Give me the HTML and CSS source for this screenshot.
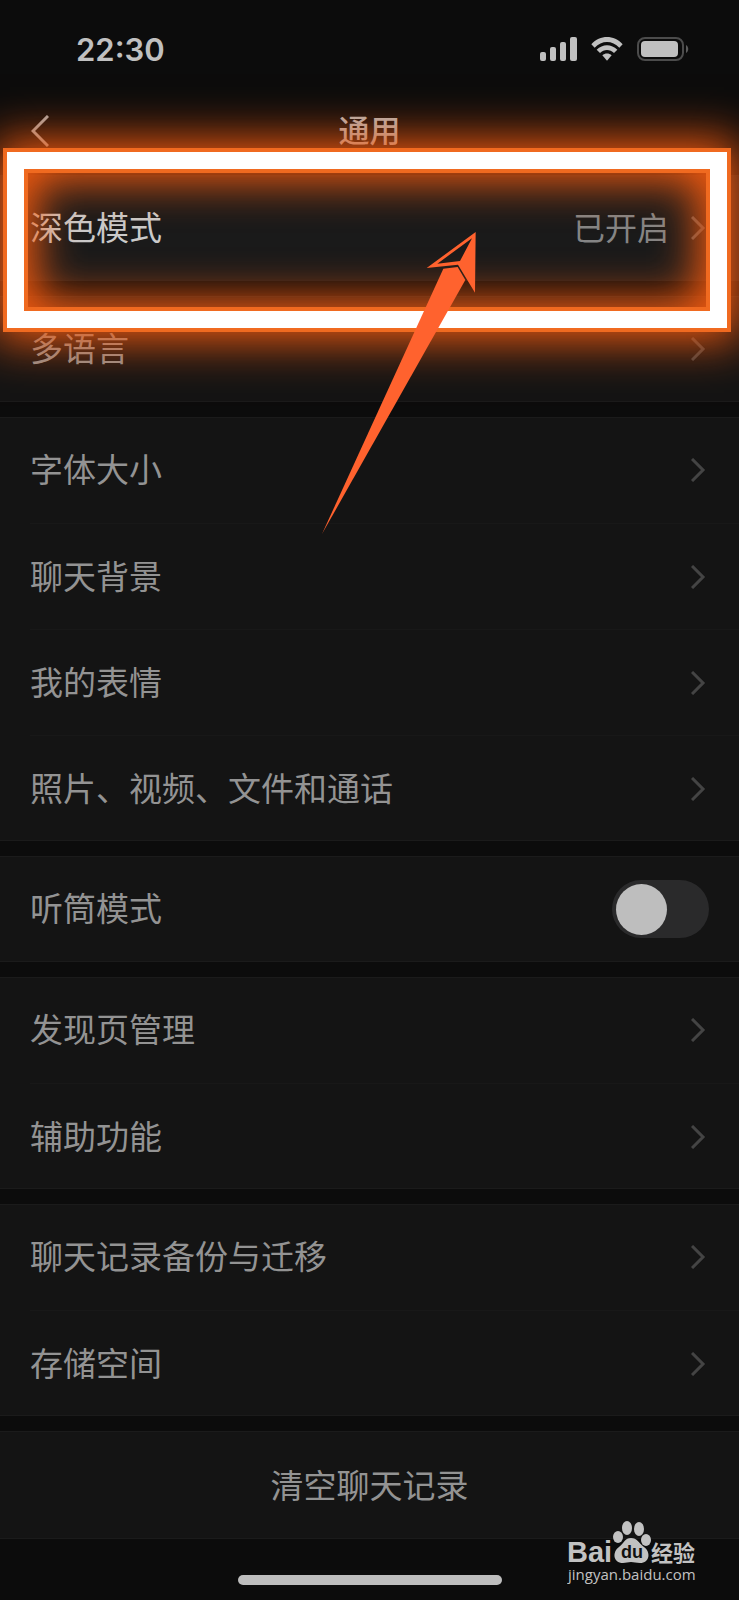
FILE: index.html
```html
<!DOCTYPE html>
<html lang="zh-CN">
<head>
<meta charset="utf-8">
<meta name="viewport" content="width=device-width, initial-scale=1">
<title>通用</title>
<link rel="stylesheet" href="styles.css">
</head>
<body>
<div class="screen">
  <div class="status-bar">
    <time class="clock">22:30</time>
    <div class="status-icons">
      <svg class="signal" viewBox="0 0 37 24" aria-hidden="true">
        <rect x="0" y="15" width="6" height="9" rx="2"/>
        <rect x="10" y="10" width="6" height="14" rx="2"/>
        <rect x="20" y="5" width="6" height="19" rx="2"/>
        <rect x="30" y="0" width="7" height="24" rx="2"/>
      </svg>
      <svg class="wifi" viewBox="0 0 94 72" aria-hidden="true">
        <path d="M0 22C26-7 68-7 94 22L84 32C63 9 31 9 10 32Z"/>
        <path d="M16 38C34 20 60 20 78 38L68 48C56 36 38 36 26 48Z"/>
        <path d="M33 55C41 48 53 48 61 55L47 71Z"/>
      </svg>
      <svg class="battery" viewBox="0 0 52 24" aria-hidden="true">
        <rect class="battery-shell" x="1" y="1" width="45" height="22" rx="7"/>
        <rect x="4" y="4" width="37" height="16" rx="4"/>
        <path class="battery-cap" d="M49 8C52 10 52 14 49 16Z"/>
      </svg>
    </div>
  </div>

  <header class="nav-bar">
    <button class="back" type="button" aria-label="返回">
      <svg viewBox="0 0 18 32" aria-hidden="true"><path d="M17 1L2 16L17 31"/></svg>
    </button>
    <h1 class="title">通用</h1>
  </header>

  <main class="groups">
    <ul class="group group-active">
      <li class="row"><a class="cell" href="#dark"><span class="label">深色模式</span><span class="value">已开启</span><svg class="chevron" viewBox="0 0 18 24" aria-hidden="true"><path d="M1 1L12 12L1 23"/></svg></a></li>
    </ul>
    <ul class="group">
      <li class="row"><a class="cell" href="#language"><span class="label">多语言</span><svg class="chevron" viewBox="0 0 18 24" aria-hidden="true"><path d="M1 1L12 12L1 23"/></svg></a></li>
    </ul>
    <ul class="group">
      <li class="row"><a class="cell" href="#font"><span class="label">字体大小</span><svg class="chevron" viewBox="0 0 18 24" aria-hidden="true"><path d="M1 1L12 12L1 23"/></svg></a></li>
      <li class="row"><a class="cell" href="#background"><span class="label">聊天背景</span><svg class="chevron" viewBox="0 0 18 24" aria-hidden="true"><path d="M1 1L12 12L1 23"/></svg></a></li>
      <li class="row"><a class="cell" href="#stickers"><span class="label">我的表情</span><svg class="chevron" viewBox="0 0 18 24" aria-hidden="true"><path d="M1 1L12 12L1 23"/></svg></a></li>
      <li class="row"><a class="cell" href="#media"><span class="label">照片、视频、文件和通话</span><svg class="chevron" viewBox="0 0 18 24" aria-hidden="true"><path d="M1 1L12 12L1 23"/></svg></a></li>
    </ul>
    <ul class="group">
      <li class="row"><div class="cell"><label class="label" for="earpiece">听筒模式</label><input class="switch" id="earpiece" type="checkbox" role="switch"></div></li>
    </ul>
    <ul class="group">
      <li class="row"><a class="cell" href="#discover"><span class="label">发现页管理</span><svg class="chevron" viewBox="0 0 18 24" aria-hidden="true"><path d="M1 1L12 12L1 23"/></svg></a></li>
      <li class="row"><a class="cell" href="#accessibility"><span class="label">辅助功能</span><svg class="chevron" viewBox="0 0 18 24" aria-hidden="true"><path d="M1 1L12 12L1 23"/></svg></a></li>
    </ul>
    <ul class="group">
      <li class="row"><a class="cell" href="#backup"><span class="label">聊天记录备份与迁移</span><svg class="chevron" viewBox="0 0 18 24" aria-hidden="true"><path d="M1 1L12 12L1 23"/></svg></a></li>
      <li class="row"><a class="cell" href="#storage"><span class="label">存储空间</span><svg class="chevron" viewBox="0 0 18 24" aria-hidden="true"><path d="M1 1L12 12L1 23"/></svg></a></li>
    </ul>
    <div class="group">
      <button class="clear" type="button">清空聊天记录</button>
    </div>
  </main>

  <div class="home-indicator"></div>

  <div class="spotlight"><div class="spotlight-inner"><div class="spotlight-glow"></div></div></div>

  <svg class="arrow" viewBox="60 60 474 918" aria-hidden="true">
    <path d="M66 972L430 176L473 171L496 210Z"/>
    <path fill-rule="evenodd" d="M527 66L380 174L474 164L525 248ZM516 85L412 161L480 153Z"/>
  </svg>

  <div class="watermark">
    <svg viewBox="0 0 134 66" role="img" aria-label="Baidu 经验">
      <text class="wm-brand" x="0" y="41">Bai</text>
      <ellipse cx="51" cy="16" rx="5" ry="6"/>
      <ellipse cx="60" cy="7" rx="5" ry="7"/>
      <ellipse cx="72" cy="8" rx="5" ry="7"/>
      <ellipse cx="79" cy="19" rx="5" ry="6"/>
      <path d="M64 17C70 17 72 22 77 26C84 31 83 42 73 42C69 42 67 41 64 41C61 41 59 42 56 42C46 42 45 31 52 26C57 22 58 17 64 17Z"/>
      <text class="wm-du" x="54" y="37">du</text>
      <text class="wm-cn" x="84" y="40">经验</text>
      <text class="wm-url" x="1" y="59">jingyan.baidu.com</text>
    </svg>
  </div>
</div>
</body>
</html>
```
FILE: styles.css
```css
*, *::before { box-sizing: border-box; }

body {
  margin: 0;
  background: #0c0c0c;
  color: #939393;
  font-family: "Noto Sans CJK SC", sans-serif;
  font-size: 33px;
}

.screen {
  position: relative;
  display: flex;
  flex-direction: column;
  overflow: hidden;
}

.status-bar {
  display: flex;
  align-items: center;
  justify-content: space-between;
  height: 98px;
  padding: 0 50px 0 76px;
}

.clock {
  color: #c0c0c0;
  font-family: Inter, sans-serif;
  font-size: 31px;
  font-weight: 600;
}

.status-icons {
  display: flex;
  align-items: center;
  gap: 14px;
  fill: #c0c0c0;
}

.signal { width: 37px; height: 24px; }
.wifi { width: 32px; height: 24px; }
.battery { width: 52px; height: 24px; }
.battery-shell { fill: none; stroke: #4c4c4c; stroke-width: 2; }
.battery-cap { fill: #5c5c5c; }

.nav-bar {
  position: relative;
  display: flex;
  align-items: center;
  justify-content: center;
  height: 66px;
  margin-bottom: 11px;
}

.title {
  margin: 0;
  padding-bottom: 5px;
  color: #b4b4b4;
  font-size: 31px;
  font-weight: 500;
}

.back {
  position: absolute;
  left: 31px;
  display: flex;
  padding: 0;
  border: 0;
  background: none;
}

.back svg {
  width: 18px;
  height: 32px;
  fill: none;
  stroke: #a8a8a8;
  stroke-width: 3;
}

.groups {
  display: flex;
  flex-direction: column;
  gap: 15px;
}

.group {
  margin: 0;
  padding: 0;
  list-style: none;
  background: #141414;
  box-shadow: inset 0 1px #1b1b1b, inset 0 -1px #1b1b1b;
}

.group-active { background: #1a1a1a; }

.row { padding-left: 30px; }

.cell {
  display: flex;
  align-items: center;
  height: 106px;
  padding-right: 30px;
  color: inherit;
  text-decoration: none;
}

.row + .row .cell { border-top: 1px solid #181818; }

.label, .value { padding-bottom: 4px; }
.label { flex: 1; }
.value { margin-right: 22px; color: #858585; font-size: 32px; }
.group-active .label { color: #cacaca; }

.chevron {
  width: 18px;
  height: 24px;
  fill: none;
  stroke: #444;
  stroke-width: 3;
}

.group-active .chevron { stroke: #5c5c5c; }

.switch {
  display: flex;
  align-items: center;
  width: 97px;
  height: 58px;
  margin: 0;
  padding: 0 4px;
  border-radius: 29px;
  background: #2a2a2b;
  appearance: none;
}

.switch::before {
  width: 51px;
  height: 51px;
  border-radius: 50%;
  background: #bebebe;
  content: "";
}

.switch:checked { justify-content: flex-end; }

.clear {
  display: block;
  width: 100%;
  height: 108px;
  padding: 0 0 2px;
  border: 0;
  background: none;
  color: inherit;
  font: inherit;
}

.home-indicator {
  width: 264px;
  height: 10px;
  margin: 36px auto 15px;
  border-radius: 5px;
  background: #bebebe;
}

/* Glowing frame around the highlighted setting */
.spotlight {
  position: absolute;
  top: 148px;
  right: 8px;
  left: 3px;
  height: 184px;
  border: 4px solid #f06a20;
  box-shadow: 0 0 44px 8px #f85c10;
  pointer-events: none;
}

.spotlight-inner {
  height: 100%;
  border: 17px solid #fff;
}

.spotlight-glow {
  height: 100%;
  border: 4px solid #f06a20;
  box-shadow: inset 0 0 44px 8px #f85c10;
}

.arrow {
  position: absolute;
  top: 230px;
  left: 320px;
  width: 158px;
  height: 306px;
  fill: #ff622e;
  pointer-events: none;
}

.watermark {
  position: absolute;
  right: 38px;
  bottom: 13px;
  width: 134px;
  height: 66px;
}

.watermark svg { display: block; fill: #c2c2c2; }
.wm-brand { font: 700 29px "Liberation Sans", sans-serif; }
.wm-du { fill: #111; font: 700 18px "Liberation Sans", sans-serif; }
.wm-cn { font: 700 22px "Noto Sans CJK SC", sans-serif; }
.wm-url { font: 500 15px "Open Sans", sans-serif; }
```
